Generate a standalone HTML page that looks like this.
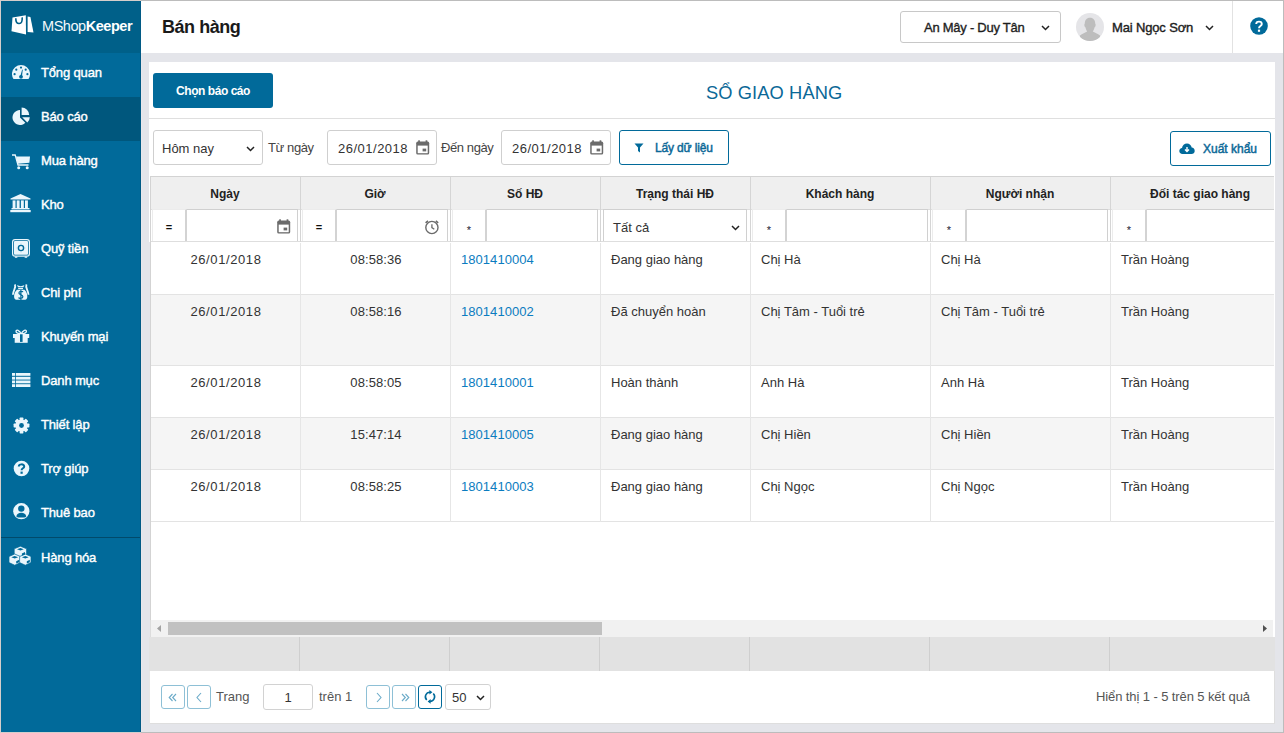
<!DOCTYPE html>
<html><head><meta charset="utf-8">
<style>
*{box-sizing:border-box;margin:0;padding:0}
html,body{width:1284px;height:733px;overflow:hidden;background:#e4e5ea;font-family:"Liberation Sans",sans-serif;color:#333;position:relative}
.a{position:absolute}
.nw{white-space:nowrap}
#frame-t{left:0;top:0;width:1284px;height:1px;background:#bcbcbc;z-index:50}
#frame-r{left:1283px;top:0;width:1px;height:733px;background:#bcbcbc;z-index:50}
#frame-b{left:0;top:732px;width:1284px;height:1px;background:#bcbcbc;z-index:50}
#frame-l{left:0;top:0;width:1px;height:733px;background:#d5cecb;z-index:51}
#side{left:0;top:0;width:141px;height:733px;background:#016a9a}
#logo{left:0;top:0;width:141px;height:53px;background:#006089}
.mi{position:absolute;left:0;width:141px;height:44px;color:#fff;font-size:13px;font-weight:normal;letter-spacing:-0.15px;-webkit-text-stroke:0.4px #fff}
.mi .t{position:absolute;left:41px;top:12px;white-space:nowrap}
.mi svg{position:absolute}
.mi.act{background:#00577d}
#hdr{left:141px;top:0;width:1143px;height:53px;background:#fff}
#panel{left:149px;top:62px;width:1126px;height:662px;background:#fff}
.btnp{background:#016a9a;color:#fff;border-radius:3px;font-size:12px;font-weight:bold;letter-spacing:-0.45px;text-align:center}
.box{border:1px solid #cfcfcf;border-radius:3px;background:#fff}
.lbl{font-size:13px;color:#444;letter-spacing:-0.4px}
.th{font-size:12px;font-weight:bold;color:#222;text-align:center}
.vl{width:1px;background:#d5d5d5}
.hl{height:1px;background:#e3e3e3}
.td{font-size:13px;color:#333;white-space:nowrap}
.ln{color:#0b7cc0}
.op{font-size:11px;color:#111;text-align:center}
.pg{border:1px solid #8ec0d6;border-radius:3px;background:#fff}
</style></head><body>
<div id="frame-t" class="a"></div><div id="frame-r" class="a"></div><div id="frame-b" class="a"></div><div id="frame-l" class="a"></div><div class="a" style="left:0;top:0;width:141px;height:1px;background:#d5cecb;z-index:52"></div><div class="a" style="left:0;top:732px;width:141px;height:1px;background:#d5cecb;z-index:52"></div>

<!-- SIDEBAR -->
<div id="side" class="a">
  <div id="logo" class="a">
    <svg class="a" style="left:11px;top:15px" width="23" height="20" viewBox="0 0 23 20">
      <path d="M1.5,2.6 L14.8,0.2 L15,19.6 L0.5,16.2 Z" fill="#fff"/>
      <path d="M16.6,1.6 L19.4,1.9 L22.5,17.4 L16.6,17 Z" fill="#fff"/>
      <path d="M4.8,3.3 C4.6,7.2 6.2,8.6 8.2,8.5 C10.5,8.4 11.4,6.6 11.2,2.4" fill="none" stroke="#006089" stroke-width="1.6"/>
    </svg>
    <div class="a nw" style="left:42px;top:18px;color:#fff;font-size:14.5px;letter-spacing:-0.45px"><span style="font-weight:normal;color:#f4f8fb">MShop</span><b>Keeper</b></div>
  </div>
  

  <div class="mi" style="top:53px">
    <svg style="left:12px;top:65px;top:12px" width="18" height="14" viewBox="0 0 18 14">
      <path d="M1.5,14 A9,9 0 1,1 16.5,14 Z" fill="#eaf6fc"/>
      <circle cx="9" cy="2.6" r="1.1" fill="#016a9a"/>
      <circle cx="4.3" cy="4.7" r="1.1" fill="#016a9a"/>
      <circle cx="13.7" cy="4.7" r="1.1" fill="#016a9a"/>
      <circle cx="2.6" cy="9.2" r="1.1" fill="#016a9a"/>
      <circle cx="15.4" cy="9.2" r="1.1" fill="#016a9a"/>
      <path d="M8.2,11.5 L10.2,4.6 L10.8,4.8 L9.9,11.8 Z" fill="#016a9a"/>
      <circle cx="9" cy="11.8" r="1.9" fill="#016a9a"/>
    </svg>
    <span class="t">Tổng quan</span>
  </div>
  <div class="mi act" style="top:97px">
    <svg style="left:12px;top:10px" width="19" height="18" viewBox="0 0 19 18">
      <path d="M8,3 A7.5,7.5 0 1,0 13.3,15.8 L8,10.5 Z" fill="#eaf6fc"/>
      <path d="M9.6,0.5 A7.6,7.6 0 0,1 17.2,8.1 L9.6,8.1 Z" fill="#eaf6fc"/>
      <path d="M10.2,10.2 L17.8,10.2 A7.6,7.6 0 0,1 15.3,15.6 Z" fill="#eaf6fc"/>
    </svg>
    <span class="t">Báo cáo</span>
  </div>
  <div class="mi" style="top:141px">
    <svg style="left:12px;top:13px" width="19" height="16" viewBox="0 0 19 16">
      <path d="M0,1 L3.2,1 L6,11 L16.5,11" fill="none" stroke="#eaf6fc" stroke-width="1.3"/>
      <path d="M4,2.4 L18,2.4 L17.4,8.8 L5.6,9.8 Z" fill="#eaf6fc"/>
      <circle cx="6.7" cy="13.8" r="1.5" fill="#eaf6fc"/>
      <circle cx="15.2" cy="13.8" r="1.5" fill="#eaf6fc"/>
    </svg>
    <span class="t">Mua hàng</span>
  </div>
  <div class="mi" style="top:185px">
    <svg style="left:10px;top:9px" width="21" height="19" viewBox="0 0 21 19">
      <path d="M10.5,0 L20.5,4.6 L20.5,5.6 L0.5,5.6 L0.5,4.6 Z" fill="#eaf6fc"/>
      <rect x="2.6" y="6.4" width="2.9" height="7.6" fill="#eaf6fc"/>
      <rect x="6.7" y="6.4" width="2.9" height="7.6" fill="#eaf6fc"/>
      <rect x="10.9" y="6.4" width="2.9" height="7.6" fill="#eaf6fc"/>
      <rect x="15" y="6.4" width="2.9" height="7.6" fill="#eaf6fc"/>
      <rect x="1.5" y="14" width="18" height="1.4" fill="#eaf6fc"/>
      <rect x="0.3" y="16" width="20.4" height="2.2" fill="#eaf6fc"/>
    </svg>
    <span class="t">Kho</span>
  </div>
  <div class="mi" style="top:229px">
    <svg style="left:12px;top:10px" width="19" height="20" viewBox="0 0 19 20">
      <rect x="0.6" y="0.6" width="16.8" height="16.6" rx="2.4" fill="none" stroke="#eaf6fc" stroke-width="1.2"/>
      <rect x="2.0" y="2.0" width="14" height="13.8" rx="1" fill="#eaf6fc"/>
      <circle cx="9" cy="9" r="2.6" fill="none" stroke="#016a9a" stroke-width="1.4"/>
      <g stroke="#9cc6dc" stroke-width="0.8"><path d="M9,4.6 V5.6 M9,12.4 V13.4 M4.6,9 H5.6 M12.4,9 H13.4"/></g>
      <rect x="2.8" y="17.4" width="2.6" height="1.4" rx="0.6" fill="#eaf6fc"/>
      <rect x="12.6" y="17.4" width="2.6" height="1.4" rx="0.6" fill="#eaf6fc"/>
    </svg>
    <span class="t">Quỹ tiền</span>
  </div>
  <div class="mi" style="top:273px">
    <svg style="left:12px;top:10px" width="19" height="18" viewBox="0 0 19 18">
      <path d="M5,6.8 L12.4,6.8 C14.5,8.5 15.5,11.5 15.3,14 C15.2,16 14,16.8 12,16.8 L5.4,16.8 C3.4,16.8 2.2,16 2.1,14 C1.9,11.5 2.9,8.5 5,6.8 Z" fill="#eaf6fc"/>
      <rect x="6.2" y="4.9" width="4.8" height="1.2" fill="#eaf6fc"/>
      <path d="M5,2 C6.5,3 7.5,2.6 8.7,3.3 C9.9,2.6 11,3 12.4,2 L11.4,4.3 L6,4.3 Z" fill="#eaf6fc"/>
      <path d="M2.9,1.3 C4.4,4.5 1.2,7 0.9,11.8 M14.5,1.3 C13,4.5 16.2,7 16.5,11.8" fill="none" stroke="#eaf6fc" stroke-width="1.8"/>
      <path d="M10.9,9.2 C10.6,7.9 6.9,7.9 6.9,9.9 C6.9,11.8 10.9,11.4 10.9,13.7 C10.9,15.8 7,15.7 6.6,14.5 M8.9,7 L8.9,16.9" fill="none" stroke="#016a9a" stroke-width="1.2"/>
    </svg>
    <span class="t">Chi phí</span>
  </div>
  <div class="mi" style="top:317px">
    <svg style="left:13px;top:12px" width="17" height="15" viewBox="0 0 17 15">
      <path d="M8.2,4.9 C6.6,1.2 3.1,0.2 3,2.3 C2.9,4.1 5.2,4.7 8.2,4.9 C11.2,4.7 13.5,4.1 13.4,2.3 C13.3,0.2 9.8,1.2 8.2,4.9" fill="none" stroke="#eaf6fc" stroke-width="1.3"/>
      <rect x="0" y="5" width="16.2" height="4" fill="#eaf6fc"/>
      <rect x="1.7" y="8.8" width="13" height="5" fill="#eaf6fc"/>
      <rect x="7" y="5.3" width="2.6" height="7.6" fill="#016a9a"/>
    </svg>
    <span class="t">Khuyến mại</span>
  </div>
  <div class="mi" style="top:361px">
    <svg style="left:12px;top:12px" width="19" height="15" viewBox="0 0 19 15">
      <rect x="0" y="0" width="3.2" height="2.8" fill="#eaf6fc"/><rect x="4" y="0" width="14.4" height="2.8" fill="#eaf6fc"/>
      <rect x="0" y="3.8" width="3.2" height="2.8" fill="#eaf6fc"/><rect x="4" y="3.8" width="14.4" height="2.8" fill="#eaf6fc"/>
      <rect x="0" y="7.5" width="3.2" height="2.8" fill="#eaf6fc"/><rect x="4" y="7.5" width="14.4" height="2.8" fill="#eaf6fc"/>
      <rect x="0" y="11.2" width="3.2" height="2.8" fill="#eaf6fc"/><rect x="4" y="11.2" width="14.4" height="2.8" fill="#eaf6fc"/>
    </svg>
    <span class="t">Danh mục</span>
  </div>
  <div class="mi" style="top:405px">
    <svg style="left:12.5px;top:11.5px" width="17" height="17" viewBox="-8.5 -8.5 17 17">
      <g fill="#eaf6fc">
        <circle r="6.1"/>
        <rect x="-1.9" y="-7.9" width="3.8" height="15.8" rx="0.7"/>
        <rect x="-1.9" y="-7.9" width="3.8" height="15.8" rx="0.7" transform="rotate(45)"/>
        <rect x="-1.9" y="-7.9" width="3.8" height="15.8" rx="0.7" transform="rotate(90)"/>
        <rect x="-1.9" y="-7.9" width="3.8" height="15.8" rx="0.7" transform="rotate(135)"/>
      </g>
      <circle r="2.4" fill="#016a9a"/>
    </svg>
    <span class="t">Thiết lập</span>
  </div>
  <div class="mi" style="top:449px">
    <svg style="left:13px;top:11px" width="17" height="17" viewBox="0 0 17 17">
      <circle cx="8.5" cy="8.5" r="7.8" fill="#eaf6fc"/>
      <path d="M5.8,6.4 C5.8,3.8 11.2,3.6 11.2,6.4 C11.2,8.3 8.6,8.2 8.6,10.2" fill="none" stroke="#016a9a" stroke-width="2"/>
      <rect x="7.5" y="11.6" width="2.2" height="2.2" fill="#016a9a"/>
    </svg>
    <span class="t">Trợ giúp</span>
  </div>
  <div class="mi" style="top:493px">
    <svg style="left:13px;top:10px" width="17" height="17" viewBox="0 0 17 17">
      <circle cx="8.3" cy="8.2" r="8.1" fill="#eaf6fc"/>
      <circle cx="8.3" cy="5.6" r="3.2" fill="#016a9a"/>
      <path d="M3.3,13.4 C3.8,10.9 5.6,9.7 8.3,9.7 C11,9.7 12.8,10.9 13.3,13.4 C12.1,14.6 10.4,14.6 8.3,14.6 C6.2,14.6 4.5,14.6 3.3,13.4 Z" fill="#016a9a"/>
    </svg>
    <span class="t">Thuê bao</span>
  </div>
  <div class="a" style="left:1px;top:537px;width:140px;height:1px;background:#014a6b"></div>
  <div class="mi" style="top:538px">
    <svg style="left:9px;top:8px" width="23" height="20" viewBox="0 0 23 20">
      <g fill="#eaf6fc" stroke="#016a9a" stroke-width="0.7" stroke-linejoin="round">
        <path d="M11.4,0.2 L17.6,2.8 L17.6,8.8 L11.4,11.4 L5.2,8.8 L5.2,2.8 Z"/>
        <path d="M5.7,8 L11.5,10.5 L11.5,16.6 L5.7,19.2 L0,16.6 L0,10.5 Z"/>
        <path d="M16.3,8 L22,10.5 L22,16.6 L16.3,19.2 L10.6,16.6 L10.6,10.5 Z"/>
      </g>
      <g fill="#016a9a">
        <path d="M8,3.3 L11.4,2.1 L14.8,3.3 L11.4,4.5 Z M2.3,11.2 L5.7,10 L9.1,11.2 L5.7,12.4 Z M12.9,11.2 L16.3,10 L19.7,11.2 L16.3,12.4 Z"/>
        <path d="M12.9,7.4 L16,6 L16,8.4 L12.9,9.8 Z M7.2,15.2 L10.2,13.8 L10.2,16.2 L7.2,17.6 Z M17.8,15.2 L20.8,13.8 L20.8,16.2 L17.8,17.6 Z"/>
      </g>
    </svg>
    <span class="t">Hàng hóa</span>
  </div>
</div>

<!-- HEADER -->
<div class="a" style="left:140px;top:1px;width:1px;height:731px;background:#015a85;z-index:5"></div>
<div id="hdr" class="a">
  <div class="a nw" style="left:21px;top:17px;font-size:18px;font-weight:bold;color:#1a1a1a;letter-spacing:-0.45px">Bán hàng</div>
  <div class="a box" style="left:759px;top:11px;width:161px;height:32px;border-color:#c8c8c8">
    <span class="a nw" style="left:23px;top:8px;font-size:13px;color:#1e1e1e;letter-spacing:-0.25px;-webkit-text-stroke:0.35px #1e1e1e">An Mây - Duy Tân</span>
    <svg class="a" style="left:140px;top:13px" width="9" height="6" viewBox="0 0 9 6"><path d="M1,1 L4.5,4.5 L8,1" fill="none" stroke="#222" stroke-width="1.5"/></svg>
  </div>
  <svg class="a" style="left:935px;top:13px" width="28" height="28" viewBox="0 0 28 28">
    <defs><clipPath id="cc"><circle cx="14" cy="14" r="14"/></clipPath></defs>
    <circle cx="14" cy="14" r="14" fill="#e5e5e8"/>
    <g clip-path="url(#cc)" fill="#bdbdbd">
      <path d="M14,4.8 C17.5,4.8 19.2,7.5 19.2,10.5 C19.9,11 19.9,13.6 18.6,14.2 C18.2,16 17.4,17.5 16.8,18.6 C18.5,19.8 21.8,20.6 24,22.6 L24,28 L4,28 L4,22.6 C6.2,20.6 9.5,19.8 11.2,18.6 C10.6,17.5 9.8,16 9.4,14.2 C8.1,13.6 8.1,11 8.8,10.5 C8.8,7.5 10.5,4.8 14,4.8 Z"/>
    </g>
  </svg>
  <div class="a nw" style="left:971px;top:20px;font-size:13px;color:#1e1e1e;letter-spacing:-0.15px;-webkit-text-stroke:0.4px #1e1e1e">Mai Ngọc Sơn</div>
  <svg class="a" style="left:1064px;top:25px" width="9" height="6" viewBox="0 0 9 6"><path d="M1,1 L4.5,4.5 L8,1" fill="none" stroke="#222" stroke-width="1.5"/></svg>
  <div class="a" style="left:1091px;top:1px;width:1px;height:52px;background:#e2e2e2"></div>
  <svg class="a" style="left:1109px;top:17px" width="18" height="18" viewBox="0 0 18 18">
    <circle cx="9" cy="9" r="8.8" fill="#016a9a"/>
    <path d="M6.2,7 C6.2,3.8 11.8,3.8 11.8,7 C11.8,9.2 9,8.9 9,11.2" fill="none" stroke="#fff" stroke-width="1.9"/>
    <rect x="7.9" y="12.6" width="2.2" height="2.2" fill="#fff"/>
  </svg>
</div>
<div class="a" style="left:141px;top:53px;width:1px;height:680px;background:#e9e7ec"></div>

<!-- PANEL -->
<div id="panel" class="a">
  <div class="a btnp" style="left:4px;top:11px;width:120px;height:35px;line-height:37px">Chọn báo cáo</div>
  <div class="a nw" style="left:557px;top:20px;font-size:18.3px;color:#0b6897;letter-spacing:0.1px">SỔ GIAO HÀNG</div>
  <div class="a" style="left:0;top:56px;width:1126px;height:1px;background:#dfdfdf"></div>

  <!-- toolbar -->
  <div class="a box" style="left:4px;top:68px;width:110px;height:35px">
    <span class="a nw" style="left:8px;top:10px;font-size:13px;color:#333">Hôm nay</span>
    <svg class="a" style="left:92px;top:15px" width="9" height="6" viewBox="0 0 9 6"><path d="M1,1 L4.5,4.5 L8,1" fill="none" stroke="#222" stroke-width="1.5"/></svg>
  </div>
  <span class="a nw lbl" style="left:119px;top:78px">Từ ngày</span>
  <div class="a box" style="left:178px;top:68px;width:110px;height:35px">
    <span class="a nw" style="left:10px;top:10px;font-size:13px;color:#333;letter-spacing:0.5px">26/01/2018</span>
    <svg class="a" style="left:88px;top:9px" width="14" height="15" viewBox="0 0 14 15"><rect x="2.2" y="0.3" width="1.7" height="2.6" fill="#6b6b6b"/><rect x="9.6" y="0.3" width="1.7" height="2.6" fill="#6b6b6b"/><rect x="0.2" y="1.6" width="13" height="13" rx="1.6" fill="#6b6b6b"/><rect x="1.7" y="5.6" width="10" height="7.6" fill="#fff"/><rect x="6.6" y="8.6" width="3.6" height="2.8" fill="#6b6b6b"/></svg>
  </div>
  <span class="a nw lbl" style="left:292px;top:78px">Đến ngày</span>
  <div class="a box" style="left:352px;top:68px;width:110px;height:35px">
    <span class="a nw" style="left:10px;top:10px;font-size:13px;color:#333;letter-spacing:0.5px">26/01/2018</span>
    <svg class="a" style="left:88px;top:9px" width="14" height="15" viewBox="0 0 14 15"><rect x="2.2" y="0.3" width="1.7" height="2.6" fill="#6b6b6b"/><rect x="9.6" y="0.3" width="1.7" height="2.6" fill="#6b6b6b"/><rect x="0.2" y="1.6" width="13" height="13" rx="1.6" fill="#6b6b6b"/><rect x="1.7" y="5.6" width="10" height="7.6" fill="#fff"/><rect x="6.6" y="8.6" width="3.6" height="2.8" fill="#6b6b6b"/></svg>
  </div>
  <div class="a" style="left:470px;top:68px;width:110px;height:35px;border:1px solid #016a9a;border-radius:3px">
    <svg class="a" style="left:14px;top:12px" width="10" height="10" viewBox="0 0 10 10"><path d="M0.5,0.5 H9.5 L6,4.5 V9.5 L4,8 V4.5 Z" fill="#016a9a"/></svg>
    <span class="a nw" style="left:35px;top:10px;font-size:12px;color:#0b6897;letter-spacing:-0.15px;-webkit-text-stroke:0.45px #0b6897">Lấy dữ liệu</span>
  </div>
  <div class="a" style="left:1021px;top:69px;width:101px;height:35px;border:1px solid #016a9a;border-radius:3px">
    <svg class="a" style="left:8px;top:11px" width="16" height="12" viewBox="0 0 16 12"><path d="M3.5,11 C1.5,11 0.3,9.6 0.3,8 C0.3,6.4 1.5,5.2 3,5.1 C3.3,2.4 5.4,0.6 8,0.6 C10.4,0.6 12.3,2.3 12.7,4.6 C14.5,4.8 15.7,6.2 15.7,7.9 C15.7,9.7 14.3,11 12.5,11 Z" fill="#016a9a"/><path d="M8,4 V8.6 M6,6.6 L8,8.6 L10,6.6" fill="none" stroke="#fff" stroke-width="1.4"/></svg>
    <span class="a nw" style="left:32px;top:10px;font-size:12px;color:#0b6897;letter-spacing:0px;-webkit-text-stroke:0.45px #0b6897">Xuất khẩu</span>
  </div>
</div>

<!-- TABLE (page coords) -->
<div class="a" style="left:150px;top:176px;width:1124px;height:445px;overflow:hidden">
  <!-- inner uses coords relative: x-150, y-176 -->
  <div class="a" style="left:0;top:0;width:1124px;height:1px;background:#d3d3d3"></div>
  <div class="a" style="left:0;top:0;width:1px;height:445px;background:#d3d3d3"></div>
  <div class="a" style="left:1px;top:1px;width:1123px;height:32px;background:#efefef"></div>
  <div class="a" style="left:1px;top:33px;width:1123px;height:33px;background:#fff"></div>
  <div class="a hl" style="left:1px;top:33px;width:1123px;background:#dedede"></div>
  <div class="a hl" style="left:1px;top:65px;width:1123px;background:#dedede"></div>
  <!-- rows -->
  <div class="a" style="left:1px;top:66px;width:1123px;height:52px;background:#fff"></div>
  <div class="a hl" style="left:1px;top:118px;width:1123px"></div>
  <div class="a" style="left:1px;top:119px;width:1123px;height:70px;background:#f5f5f5"></div>
  <div class="a hl" style="left:1px;top:189px;width:1123px"></div>
  <div class="a" style="left:1px;top:190px;width:1123px;height:51px;background:#fff"></div>
  <div class="a hl" style="left:1px;top:241px;width:1123px"></div>
  <div class="a" style="left:1px;top:242px;width:1123px;height:51px;background:#f5f5f5"></div>
  <div class="a hl" style="left:1px;top:293px;width:1123px"></div>
  <div class="a" style="left:1px;top:294px;width:1123px;height:51px;background:#fff"></div>
  <div class="a hl" style="left:1px;top:345px;width:1123px"></div>
<div class="a" style="left:150px;top:1px;width:1px;height:32px;background:#d5d5d5"></div>
<div class="a" style="left:150px;top:33px;width:1px;height:33px;background:#d5d5d5"></div>
<div class="a" style="left:150px;top:67px;width:1px;height:279px;background:#e6e6e6"></div>
<div class="a" style="left:300px;top:1px;width:1px;height:32px;background:#d5d5d5"></div>
<div class="a" style="left:300px;top:33px;width:1px;height:33px;background:#d5d5d5"></div>
<div class="a" style="left:300px;top:67px;width:1px;height:279px;background:#e6e6e6"></div>
<div class="a" style="left:450px;top:1px;width:1px;height:32px;background:#d5d5d5"></div>
<div class="a" style="left:450px;top:33px;width:1px;height:33px;background:#d5d5d5"></div>
<div class="a" style="left:450px;top:67px;width:1px;height:279px;background:#e6e6e6"></div>
<div class="a" style="left:600px;top:1px;width:1px;height:32px;background:#d5d5d5"></div>
<div class="a" style="left:600px;top:33px;width:1px;height:33px;background:#d5d5d5"></div>
<div class="a" style="left:600px;top:67px;width:1px;height:279px;background:#e6e6e6"></div>
<div class="a" style="left:780px;top:1px;width:1px;height:32px;background:#d5d5d5"></div>
<div class="a" style="left:780px;top:33px;width:1px;height:33px;background:#d5d5d5"></div>
<div class="a" style="left:780px;top:67px;width:1px;height:279px;background:#e6e6e6"></div>
<div class="a" style="left:960px;top:1px;width:1px;height:32px;background:#d5d5d5"></div>
<div class="a" style="left:960px;top:33px;width:1px;height:33px;background:#d5d5d5"></div>
<div class="a" style="left:960px;top:67px;width:1px;height:279px;background:#e6e6e6"></div>
<div class="a nw th" style="left:0px;top:11px;width:150px">Ngày</div>
<div class="a nw th" style="left:150px;top:11px;width:150px">Giờ</div>
<div class="a nw th" style="left:300px;top:11px;width:150px">Số HĐ</div>
<div class="a nw th" style="left:450px;top:11px;width:150px">Trạng thái HĐ</div>
<div class="a nw th" style="left:600px;top:11px;width:180px">Khách hàng</div>
<div class="a nw th" style="left:780px;top:11px;width:180px">Người nhận</div>
<div class="a nw th" style="left:960px;top:11px;width:180px">Đối tác giao hàng</div>
<div class="a" style="left:2px;top:33px;width:35px;height:32px;border:1px solid #ececec;border-right:2px solid #d3d3d3;border-bottom:none;background:#fff"></div>
<div class="a op" style="left:2px;top:45px;width:34px;font-weight:bold">=</div>
<div class="a" style="left:37px;top:33px;width:111px;height:32px;border-top:1px solid #d0d0d0;border-right:1px solid #d0d0d0;background:#fff"></div>
<div class="a" style="left:152px;top:33px;width:35px;height:32px;border:1px solid #ececec;border-right:2px solid #d3d3d3;border-bottom:none;background:#fff"></div>
<div class="a op" style="left:152px;top:45px;width:34px;font-weight:bold">=</div>
<div class="a" style="left:187px;top:33px;width:111px;height:32px;border-top:1px solid #d0d0d0;border-right:1px solid #d0d0d0;background:#fff"></div>
<div class="a" style="left:302px;top:33px;width:35px;height:32px;border:1px solid #ececec;border-right:2px solid #d3d3d3;border-bottom:none;background:#fff"></div>
<div class="a op" style="left:302px;top:48px;width:34px;font-size:11px;color:#223">*</div>
<div class="a" style="left:337px;top:33px;width:111px;height:32px;border-top:1px solid #d0d0d0;border-right:1px solid #d0d0d0;background:#fff"></div>
<div class="a" style="left:453px;top:33px;width:144px;height:32px;border:1px solid #d0d0d0;border-bottom:none;background:#fff"><span class="a nw" style="left:9px;top:10px;font-size:13px;color:#333">Tất cả</span><svg class="a" style="left:127px;top:15px" width="9" height="6" viewBox="0 0 9 6"><path d="M1,1 L4.5,4.5 L8,1" fill="none" stroke="#222" stroke-width="1.5"/></svg></div>
<div class="a" style="left:602px;top:33px;width:35px;height:32px;border:1px solid #ececec;border-right:2px solid #d3d3d3;border-bottom:none;background:#fff"></div>
<div class="a op" style="left:602px;top:48px;width:34px;font-size:11px;color:#223">*</div>
<div class="a" style="left:637px;top:33px;width:141px;height:32px;border-top:1px solid #d0d0d0;border-right:1px solid #d0d0d0;background:#fff"></div>
<div class="a" style="left:782px;top:33px;width:35px;height:32px;border:1px solid #ececec;border-right:2px solid #d3d3d3;border-bottom:none;background:#fff"></div>
<div class="a op" style="left:782px;top:48px;width:34px;font-size:11px;color:#223">*</div>
<div class="a" style="left:817px;top:33px;width:141px;height:32px;border-top:1px solid #d0d0d0;border-right:1px solid #d0d0d0;background:#fff"></div>
<div class="a" style="left:962px;top:33px;width:35px;height:32px;border:1px solid #ececec;border-right:2px solid #d3d3d3;border-bottom:none;background:#fff"></div>
<div class="a op" style="left:962px;top:48px;width:34px;font-size:11px;color:#223">*</div>
<div class="a" style="left:997px;top:33px;width:141px;height:32px;border-top:1px solid #d0d0d0;border-right:1px solid #d0d0d0;background:#fff"></div>
<svg class="a" style="left:127px;top:43px" width="14" height="15" viewBox="0 0 14 15"><rect x="2.2" y="0.3" width="1.7" height="2.6" fill="#6b6b6b"/><rect x="9.6" y="0.3" width="1.7" height="2.6" fill="#6b6b6b"/><rect x="0.2" y="1.6" width="13" height="13" rx="1.6" fill="#6b6b6b"/><rect x="1.7" y="5.6" width="10" height="7.6" fill="#fff"/><rect x="6.6" y="8.6" width="3.6" height="2.8" fill="#6b6b6b"/></svg>
<svg class="a" style="left:273px;top:42px" width="17" height="17" viewBox="0 0 17 17"><circle cx="8.9" cy="9.5" r="6.1" fill="none" stroke="#6b6b6b" stroke-width="1.4"/><path d="M8.9,6.3 V9.6 L11.3,11.2" fill="none" stroke="#6b6b6b" stroke-width="1.3"/><path d="M2.6,4.8 L5,2.9 M15.2,4.8 L12.8,2.9" stroke="#6b6b6b" stroke-width="1.6"/></svg>
<div class="a td" style="left:1px;top:76px;width:150px;text-align:center;letter-spacing:0.6px;">26/01/2018</div>
<div class="a td" style="left:151px;top:76px;width:150px;text-align:center;letter-spacing:0.1px;">08:58:36</div>
<div class="a td ln" style="left:311px;top:76px;letter-spacing:0.05px">1801410004</div>
<div class="a td" style="left:461px;top:76px">Đang giao hàng</div>
<div class="a td" style="left:611px;top:76px">Chị Hà</div>
<div class="a td" style="left:791px;top:76px">Chị Hà</div>
<div class="a td" style="left:971px;top:76px">Trần Hoàng</div>
<div class="a td" style="left:1px;top:128px;width:150px;text-align:center;letter-spacing:0.6px;">26/01/2018</div>
<div class="a td" style="left:151px;top:128px;width:150px;text-align:center;letter-spacing:0.1px;">08:58:16</div>
<div class="a td ln" style="left:311px;top:128px;letter-spacing:0.05px">1801410002</div>
<div class="a td" style="left:461px;top:128px">Đã chuyển hoàn</div>
<div class="a td" style="left:611px;top:128px">Chị Tâm - Tuổi trẻ</div>
<div class="a td" style="left:791px;top:128px">Chị Tâm - Tuổi trẻ</div>
<div class="a td" style="left:971px;top:128px">Trần Hoàng</div>
<div class="a td" style="left:1px;top:199px;width:150px;text-align:center;letter-spacing:0.6px;">26/01/2018</div>
<div class="a td" style="left:151px;top:199px;width:150px;text-align:center;letter-spacing:0.1px;">08:58:05</div>
<div class="a td ln" style="left:311px;top:199px;letter-spacing:0.05px">1801410001</div>
<div class="a td" style="left:461px;top:199px">Hoàn thành</div>
<div class="a td" style="left:611px;top:199px">Anh Hà</div>
<div class="a td" style="left:791px;top:199px">Anh Hà</div>
<div class="a td" style="left:971px;top:199px">Trần Hoàng</div>
<div class="a td" style="left:1px;top:251px;width:150px;text-align:center;letter-spacing:0.6px;">26/01/2018</div>
<div class="a td" style="left:151px;top:251px;width:150px;text-align:center;letter-spacing:0.1px;">15:47:14</div>
<div class="a td ln" style="left:311px;top:251px;letter-spacing:0.05px">1801410005</div>
<div class="a td" style="left:461px;top:251px">Đang giao hàng</div>
<div class="a td" style="left:611px;top:251px">Chị Hiền</div>
<div class="a td" style="left:791px;top:251px">Chị Hiền</div>
<div class="a td" style="left:971px;top:251px">Trần Hoàng</div>
<div class="a td" style="left:1px;top:303px;width:150px;text-align:center;letter-spacing:0.6px;">26/01/2018</div>
<div class="a td" style="left:151px;top:303px;width:150px;text-align:center;letter-spacing:0.1px;">08:58:25</div>
<div class="a td ln" style="left:311px;top:303px;letter-spacing:0.05px">1801410003</div>
<div class="a td" style="left:461px;top:303px">Đang giao hàng</div>
<div class="a td" style="left:611px;top:303px">Chị Ngọc</div>
<div class="a td" style="left:791px;top:303px">Chị Ngọc</div>
<div class="a td" style="left:971px;top:303px">Trần Hoàng</div>
</div>

<div class="a" style="left:149px;top:242px;width:1px;height:395px;background:#e4e5ea"></div>
<div class="a" style="left:150px;top:620px;width:1px;height:17px;background:#dcdcdc"></div>
<!-- SCROLLBAR -->
<div class="a" style="left:151px;top:620px;width:1122px;height:17px;background:#f1f1f1"></div>
<div class="a" style="left:168px;top:622px;width:434px;height:13px;background:#c1c1c1"></div>
<svg class="a" style="left:156px;top:624px" width="6" height="9" viewBox="0 0 6 9"><path d="M5,1 L1,4.5 L5,8 Z" fill="#a3a3a3"/></svg>
<svg class="a" style="left:1262px;top:624px" width="6" height="9" viewBox="0 0 6 9"><path d="M1,1 L5,4.5 L1,8 Z" fill="#505050"/></svg>
<!-- FOOTER SUMMARY -->
<div class="a" style="left:149px;top:637px;width:1126px;height:34px;background:#e2e2e2"></div>

<div class="a" style="left:299px;top:637px;width:1px;height:34px;background:#cfcfcf"></div>
<div class="a" style="left:449px;top:637px;width:1px;height:34px;background:#cfcfcf"></div>
<div class="a" style="left:599px;top:637px;width:1px;height:34px;background:#cfcfcf"></div>
<div class="a" style="left:749px;top:637px;width:1px;height:34px;background:#cfcfcf"></div>
<div class="a" style="left:929px;top:637px;width:1px;height:34px;background:#cfcfcf"></div>
<div class="a" style="left:1109px;top:637px;width:1px;height:34px;background:#cfcfcf"></div>
<!-- PAGER -->
<div class="a" style="left:149px;top:723px;width:1126px;height:1px;background:#dedede"></div><div class="a" style="left:1274px;top:671px;width:1px;height:53px;background:#dedede"></div><div class="a" style="left:149px;top:671px;width:1px;height:53px;background:#e6e6e6"></div>
<div class="a pg" style="left:161px;top:685px;width:24px;height:24px">
  <svg class="a" style="left:5px;top:7px" width="12" height="9" viewBox="0 0 12 9"><path d="M5.5,1 L2.2,4.5 L5.5,8 M9,1 L5.7,4.5 L9,8" fill="none" stroke="#6aaac8" stroke-width="1.1"/></svg>
</div>
<div class="a pg" style="left:187px;top:685px;width:24px;height:24px">
  <svg class="a" style="left:7px;top:6px" width="8" height="11" viewBox="0 0 8 11"><path d="M6,1 L2,5.5 L6,10" fill="none" stroke="#6aaac8" stroke-width="1.1"/></svg>
</div>
<span class="a nw" style="left:216px;top:689px;font-size:13px;color:#555">Trang</span>
<div class="a box" style="left:263px;top:684px;width:50px;height:26px;border-color:#d2d2d2">
  <span class="a nw" style="left:0;width:48px;text-align:center;top:5px;font-size:13px;color:#333">1</span>
</div>
<span class="a nw" style="left:319px;top:689px;font-size:13px;color:#555">trên 1</span>
<div class="a pg" style="left:366px;top:685px;width:24px;height:24px">
  <svg class="a" style="left:8px;top:6px" width="8" height="11" viewBox="0 0 8 11"><path d="M2,1 L6,5.5 L2,10" fill="none" stroke="#6aaac8" stroke-width="1.1"/></svg>
</div>
<div class="a pg" style="left:392px;top:685px;width:24px;height:24px">
  <svg class="a" style="left:6px;top:7px" width="12" height="9" viewBox="0 0 12 9"><path d="M3,1 L6.3,4.5 L3,8 M6.5,1 L9.8,4.5 L6.5,8" fill="none" stroke="#6aaac8" stroke-width="1.1"/></svg>
</div>
<div class="a" style="left:418px;top:685px;width:24px;height:24px;border:1px solid #016a9a;border-radius:3px">
  <svg class="a" style="left:3px;top:3px" width="16" height="16" viewBox="0 0 16 16"><path d="M8,3.2 A4.6,4.6 0 0,0 4.75,11.05 M8,12.4 A4.6,4.6 0 0,0 11.25,4.55" fill="none" stroke="#016a9a" stroke-width="1.6"/><path d="M7.4,0.9 L10.4,3.2 L7.4,5.5 Z M8.6,10.1 L5.6,12.4 L8.6,14.7 Z" fill="#016a9a"/></svg>
</div>
<div class="a box" style="left:445px;top:684px;width:46px;height:26px;border-color:#d2d2d2">
  <span class="a nw" style="left:6px;top:5px;font-size:13px;color:#333">50</span>
  <svg class="a" style="left:30px;top:10px" width="9" height="6" viewBox="0 0 9 6"><path d="M1,1 L4.5,4.5 L8,1" fill="none" stroke="#222" stroke-width="1.5"/></svg>
</div>
<span class="a nw" style="left:1096px;top:689px;font-size:13px;color:#555;letter-spacing:-0.1px">Hiển thị 1 - 5 trên 5 kết quả</span>
</body></html>
